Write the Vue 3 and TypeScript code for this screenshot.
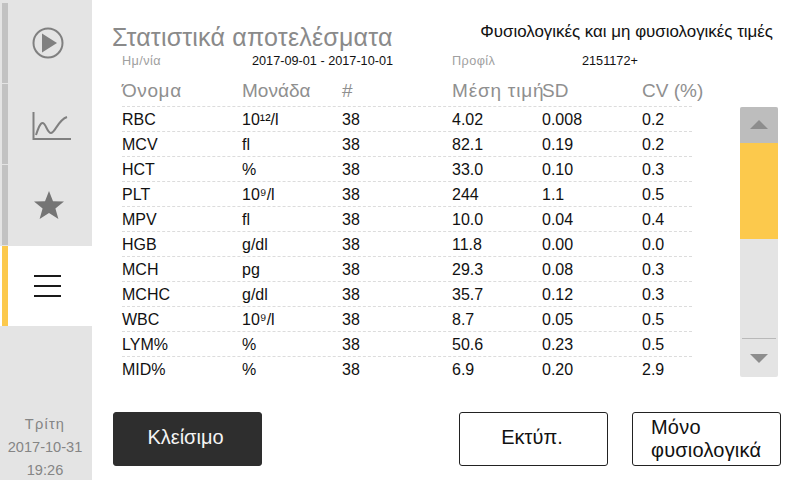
<script setup lang="ts">
interface Row { name: string; unit: string; n: string; mean: string; sd: string; cv: string }
const rows: Row[] = [
  { name: 'RBC', unit: '10¹²/l', n: '38', mean: '4.02', sd: '0.008', cv: '0.2' },
  { name: 'MCV', unit: 'fl', n: '38', mean: '82.1', sd: '0.19', cv: '0.2' },
  { name: 'HCT', unit: '%', n: '38', mean: '33.0', sd: '0.10', cv: '0.3' },
  { name: 'PLT', unit: '10⁹/l', n: '38', mean: '244', sd: '1.1', cv: '0.5' },
  { name: 'MPV', unit: 'fl', n: '38', mean: '10.0', sd: '0.04', cv: '0.4' },
  { name: 'HGB', unit: 'g/dl', n: '38', mean: '11.8', sd: '0.00', cv: '0.0' },
  { name: 'MCH', unit: 'pg', n: '38', mean: '29.3', sd: '0.08', cv: '0.3' },
  { name: 'MCHC', unit: 'g/dl', n: '38', mean: '35.7', sd: '0.12', cv: '0.3' },
  { name: 'WBC', unit: '10⁹/l', n: '38', mean: '8.7', sd: '0.05', cv: '0.5' },
  { name: 'LYM%', unit: '%', n: '38', mean: '50.6', sd: '0.23', cv: '0.5' },
  { name: 'MID%', unit: '%', n: '38', mean: '6.9', sd: '0.20', cv: '2.9' },
]
</script>

<template>
  <div class="screen">
    <aside class="side">
      <nav class="tabs">
        <div class="tab">
          <svg width="34" height="34" viewBox="0 0 34 34">
            <circle cx="17" cy="17" r="14.5" fill="none" stroke="#808080" stroke-width="2" />
            <path d="M11 7.5 L26 17 L11 26.5 Z" fill="#808080" />
          </svg>
        </div>
        <div class="tab">
          <svg width="47" height="34" viewBox="0 0 47 34">
            <path d="M9.5 5 V32 H47" fill="none" stroke="#808080" stroke-width="2" />
            <path d="M12 28 C14 22 16 16 18.500 16 C22 16 23 26 27 26 C31 26 34 13 43 10" fill="none" stroke="#808080" stroke-width="2" />
          </svg>
        </div>
        <div class="tab">
          <svg width="34" height="30" viewBox="0 0 34 30">
            <path d="M18 1 L22 11.2 L33 11.6 L24.4 18.4 L27.4 29 L18 23 L8.6 29 L11.6 18.4 L3 11.6 L14 11.2 Z" fill="#757575" />
          </svg>
        </div>
        <div class="tab active">
          <span class="burger"><i></i><i></i><i></i></span>
        </div>
      </nav>
      <div class="clock">
        <span class="day">Τρίτη</span>
        <span>2017-10-31</span>
        <span>19:26</span>
      </div>
    </aside>

    <main class="main">
      <header class="head">
        <h1>Στατιστικά αποτελέσματα</h1>
        <p>Φυσιολογικές και μη φυσιολογικές τιμές</p>
      </header>

      <div class="meta">
        <span class="label">Ημ/νία</span>
        <span class="value dates">2017-09-01 - 2017-10-01</span>
        <span class="label">Προφίλ</span>
        <span class="value">2151172+</span>
      </div>

      <div class="body">
        <div class="table">
          <div class="tr th">
            <span class="wide">Όνομα</span><span>Μονάδα</span><span>#</span><span class="wider">Μέση τιμή</span><span>SD</span><span>CV (%)</span>
          </div>
          <div v-for="r in rows" :key="r.name" class="tr td">
            <span>{{ r.name }}</span><span>{{ r.unit }}</span><span>{{ r.n }}</span><span>{{ r.mean }}</span><span>{{ r.sd }}</span><span>{{ r.cv }}</span>
          </div>
        </div>

        <div class="scroll">
          <div class="up"><b class="tri-up"></b></div>
          <div class="thumb"></div>
          <div class="track"></div>
          <div class="down"><b class="tri-down"></b></div>
        </div>
      </div>

      <footer class="actions">
        <button class="btn dark">Κλείσιμο</button>
        <div class="right">
          <button class="btn print">Εκτύπ.</button>
          <button class="btn only">Μόνο φυσιολογικά</button>
        </div>
      </footer>
    </main>
  </div>
</template>

<style>
html, body { margin: 0; background: #fff; }
</style>

<style scoped>
.screen {
  display: flex;
  width: 800px;
  height: 480px;
  overflow: hidden;
  background: #fff;
  font-family: "Liberation Sans", Arial, sans-serif;
  color: #111;
}
.side {
  width: 92px;
  height: 480px;
  flex: none;
  background: #e4e4e4;
  display: flex;
  flex-direction: column;
  padding-top: 3px;
  box-sizing: border-box;
}
.tabs { display: flex; flex-direction: column; }
.tab {
  height: 80px;
  margin-bottom: 1px;
  display: flex;
  align-items: center;
  justify-content: center;
  border-left: 6px solid #c2c2c2;
  margin-left: 2px;
  padding-right: 5px;
  box-sizing: border-box;
}
.tab svg { display: block; }
.tab.active {
  background: #fff;
  border-left-color: #fcc94c;
  margin-bottom: 0;
  position: relative;
  box-shadow: -2px 0 0 #fff;
}
.burger { display: flex; flex-direction: column; gap: 8px; }
.burger i { display: block; width: 27px; height: 2px; background: #1a1a1a; }
.clock {
  margin-top: auto;
  display: flex;
  flex-direction: column;
  align-items: center;
  color: #858585;
  font-size: 14.6px;
  line-height: 23px;
  height: 69px;
  padding-right: 2px;
  margin-bottom: -2px;
}
.clock .day { letter-spacing: 1.2px; }
.main {
  flex: 1;
  display: flex;
  flex-direction: column;
  padding-left: 20px;
  min-width: 0;
}
.head {
  display: flex;
  justify-content: space-between;
  align-items: flex-start;
  height: 53px;
  padding-top: 22px;
  box-sizing: border-box;
  padding-right: 27px;
}
.head h1 {
  margin: 0;
  font-weight: 400;
  font-size: 25px;
  line-height: 30px;
  color: #8a8a8a;
  letter-spacing: 0.2px;
  white-space: nowrap;
}
.head p {
  margin: 0;
  font-size: 16.9px;
  line-height: 20px;
  color: #111;
  white-space: nowrap;
}
.meta {
  display: grid;
  grid-template-columns: 130px 200px 130px 1fr;
  align-items: center;
  margin-left: 10px;
  font-size: 12.7px;
  line-height: 16px;
  height: 16px;
}
.label { color: #a0a0a0; letter-spacing: 0.4px; }
.body { display: flex; position: relative; }
.table { width: 570px; margin-left: 10px; margin-top: 6px; }
.tr {
  display: grid;
  grid-template-columns: 120px 100px 110px 90px 100px 50px;
  white-space: nowrap;
}
.th {
  height: 31px;
  align-items: center;
  font-size: 19px;
  color: #8f8f8f;
}
.th .wide { letter-spacing: 0.6px; }
.th .wider { letter-spacing: 0.8px; }
.td {
  height: 25px;
  box-sizing: border-box;
  border-top: 1px dashed #dcdcdc;
  align-items: center;
  font-size: 16px;
  color: #111;
  padding-top: 1px;
}
.scroll {
  position: absolute;
  left: 628px;
  top: 38px;
  width: 38px;
  height: 270px;
  display: flex;
  flex-direction: column;
  background: #e4e4e4;
  border-radius: 2px;
  overflow: hidden;
}
.up {
  height: 36px;
  background: #bdbdbd;
  display: flex;
  align-items: center;
  justify-content: center;
}
.thumb { height: 96px; background: #fcc94c; }
.track { flex: 1; border-bottom: 1px solid #b9b9b9; margin: 0 2px; }
.down {
  height: 38px;
  display: flex;
  align-items: center;
  justify-content: center;
}
.tri-up, .tri-down { width: 0; height: 0; border-left: 9px solid transparent; border-right: 9px solid transparent; }
.tri-up { border-bottom: 9px solid #8d8d8d; margin-bottom: 2px; }
.tri-down { border-top: 9px solid #8d8d8d; }
.actions {
  margin-top: auto;
  margin-bottom: 14px;
  display: flex;
  justify-content: space-between;
  align-items: stretch;
  height: 54px;
  padding-left: 1px;
  padding-right: 19px;
}
.right { display: flex; gap: 24px; }
.btn {
  font-family: inherit;
  font-size: 20px;
  border-radius: 3px;
  box-sizing: border-box;
  height: 54px;
  width: 149px;
  padding: 0 3px 3px 0;
  background: #fff;
  color: #111;
  border: 1px solid #222;
}
.dark { background: #2e2e2e; border-color: #2e2e2e; color: #f4f4f4; padding-right: 4px; }
.only { text-align: left; padding: 0 0 1px 18px; line-height: 23px; letter-spacing: 0.2px; }
</style>
